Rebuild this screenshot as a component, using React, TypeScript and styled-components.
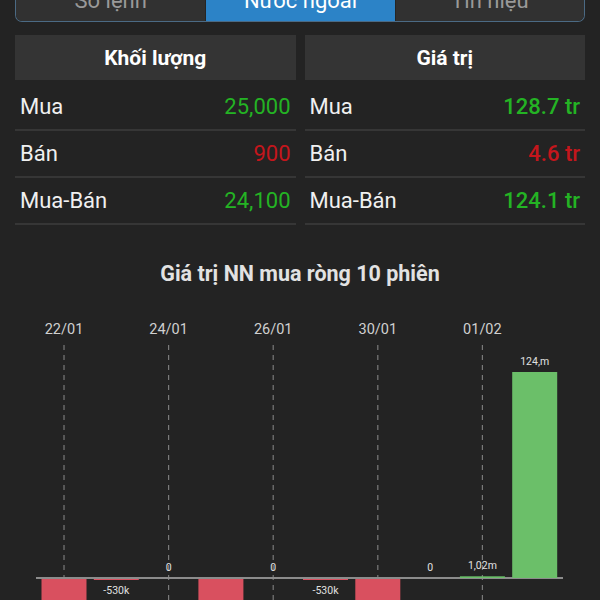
import styled, { createGlobalStyle } from 'styled-components';

const GlobalStyle = createGlobalStyle`
  html, body {
    margin: 0;
    padding: 0;
    background: #232323;
  }
  body {
    font-family: Roboto, 'Noto Sans', sans-serif;
  }
`;

const colors = {
  bg: '#232323',
  panel: '#343434',
  line: '#363636',
  up: '#24b324',
  down: '#c4161c',
  barUp: '#6bbf69',
  barDown: '#d9505f',
};

const tabs = ['Sổ lệnh', 'Nước ngoài', 'Tín hiệu'];

type Row = { label: string; value: string; up: boolean };

const volumeRows: Row[] = [
  { label: 'Mua', value: '25,000', up: true },
  { label: 'Bán', value: '900', up: false },
  { label: 'Mua-Bán', value: '24,100', up: true },
];

const valueRows: Row[] = [
  { label: 'Mua', value: '128.7 tr', up: true },
  { label: 'Bán', value: '4.6 tr', up: false },
  { label: 'Mua-Bán', value: '124.1 tr', up: true },
];

// value in millions, label shown next to bar
const sessions = [
  { date: '22/01', value: -30, label: '' },
  { date: '', value: -0.53, label: '-530k' },
  { date: '24/01', value: 0, label: '0' },
  { date: '', value: -30, label: '' },
  { date: '26/01', value: 0, label: '0' },
  { date: '', value: -0.53, label: '-530k' },
  { date: '30/01', value: -30, label: '' },
  { date: '', value: 0, label: '0' },
  { date: '01/02', value: 1.02, label: '1,02m' },
  { date: '', value: 124.1, label: '124,m' },
];

export default function App() {
  return (
    <>
      <GlobalStyle />
      <Page>
        <TabBar>
          {tabs.map((t, i) => (
            <Tab key={t} $active={i === 1}>
              {t}
            </Tab>
          ))}
        </TabBar>

        <Stats>
          <StatColumn title='Khối lượng' rows={volumeRows} />
          <StatColumn title='Giá trị' rows={valueRows} bold />
        </Stats>

        <ChartTitle>Giá trị NN mua ròng 10 phiên</ChartTitle>
        <NetChart />
      </Page>
    </>
  );
}

function StatColumn({ title, rows, bold }: { title: string; rows: Row[]; bold?: boolean }) {
  return (
    <Column>
      <Header>{title}</Header>
      {rows.map(r => (
        <StatRow key={r.label}>
          <span>{r.label}</span>
          <Value $up={r.up} $bold={bold}>
            {r.value}
          </Value>
        </StatRow>
      ))}
    </Column>
  );
}

function NetChart() {
  const zeroY = 277;
  const scale = 206 / 124.1;
  const step = 52.3;
  const barW = 45;

  return (
    <ChartSvg width='600' height='300' viewBox='0 0 600 300'>
      {sessions.map((s, i) => {
        const cx = 64 + i * step;
        return s.date ? (
          <g key={'d' + i}>
            <text x={cx} y={33} textAnchor='middle' fill='#d0d0d0' fontSize='14.5'>
              {s.date}
            </text>
            <line x1={cx} y1={44} x2={cx} y2={300} stroke='#7a7a7a' strokeWidth='1.2' strokeDasharray='5 5' />
          </g>
        ) : null;
      })}
      <line x1={36} y1={zeroY} x2={563} y2={zeroY} stroke='#8c8c8c' strokeWidth='2' />
      {sessions.map((s, i) => {
        const cx = 64 + i * step;
        const h = Math.abs(s.value) * scale;
        const up = s.value >= 0;
        return (
          <g key={'b' + i}>
            {s.value !== 0 && (
              <rect
                x={cx - barW / 2}
                y={up ? zeroY - h : zeroY + 1}
                width={barW}
                height={Math.max(h, 1)}
                fill={up ? colors.barUp : colors.barDown}
              />
            )}
            {s.label && (
              <text
                x={cx}
                y={up ? zeroY - h - 7 : zeroY + 16}
                textAnchor='middle'
                fill='#e0e0e0'
                fontSize='10.5'
              >
                {s.label}
              </text>
            )}
          </g>
        );
      })}
    </ChartSvg>
  );
}

const Page = styled.div`
  width: 600px;
  height: 600px;
  overflow: hidden;
  background: ${colors.bg};
  color: #eeeeee;
`;

const TabBar = styled.div`
  margin: -20px 15px 0;
  height: 41px;
  display: grid;
  grid-template-columns: repeat(3, 1fr);
  border: 1.5px solid #4b6a84;
  border-top: none;
  border-radius: 0 0 7px 7px;
  overflow: hidden;
`;

const Tab = styled.div<{ $active?: boolean }>`
  display: flex;
  align-items: center;
  justify-content: center;
  font-size: 22px;
  background: ${p => (p.$active ? '#2c83c7' : '#313131')};
  color: ${p => (p.$active ? '#ffffff' : '#999999')};

  & + & {
    border-left: 1px solid #252525;
  }
`;

const Stats = styled.div`
  display: grid;
  grid-template-columns: 1fr 1fr;
  column-gap: 9px;
  padding: 0 15px;
  margin-top: 13px;
`;

const Column = styled.div`
  display: flex;
  flex-direction: column;
`;

const Header = styled.div`
  height: 45px;
  margin-bottom: 4px;
  display: flex;
  align-items: center;
  justify-content: center;
  background: ${colors.panel};
  font-size: 21px;
  font-weight: 700;
  color: #ffffff;
`;

const StatRow = styled.div`
  height: 45px;
  border-bottom: 2px solid ${colors.line};
  display: flex;
  align-items: center;
  justify-content: space-between;
  padding: 0 5px;
  font-size: 22px;
  color: #f0f0f0;
`;

const Value = styled.span<{ $up: boolean; $bold?: boolean }>`
  color: ${p => (p.$up ? colors.up : colors.down)};
  font-weight: ${p => (p.$bold ? 500 : 400)};
`;

const ChartTitle = styled.div`
  margin-top: 36px;
  height: 26px;
  line-height: 26px;
  text-align: center;
  font-size: 21.5px;
  font-weight: 700;
  color: #e2e2e2;
`;

const ChartSvg = styled.svg`
  display: block;
  margin-top: 14px;
  font-family: Roboto, 'Noto Sans', sans-serif;
`;
